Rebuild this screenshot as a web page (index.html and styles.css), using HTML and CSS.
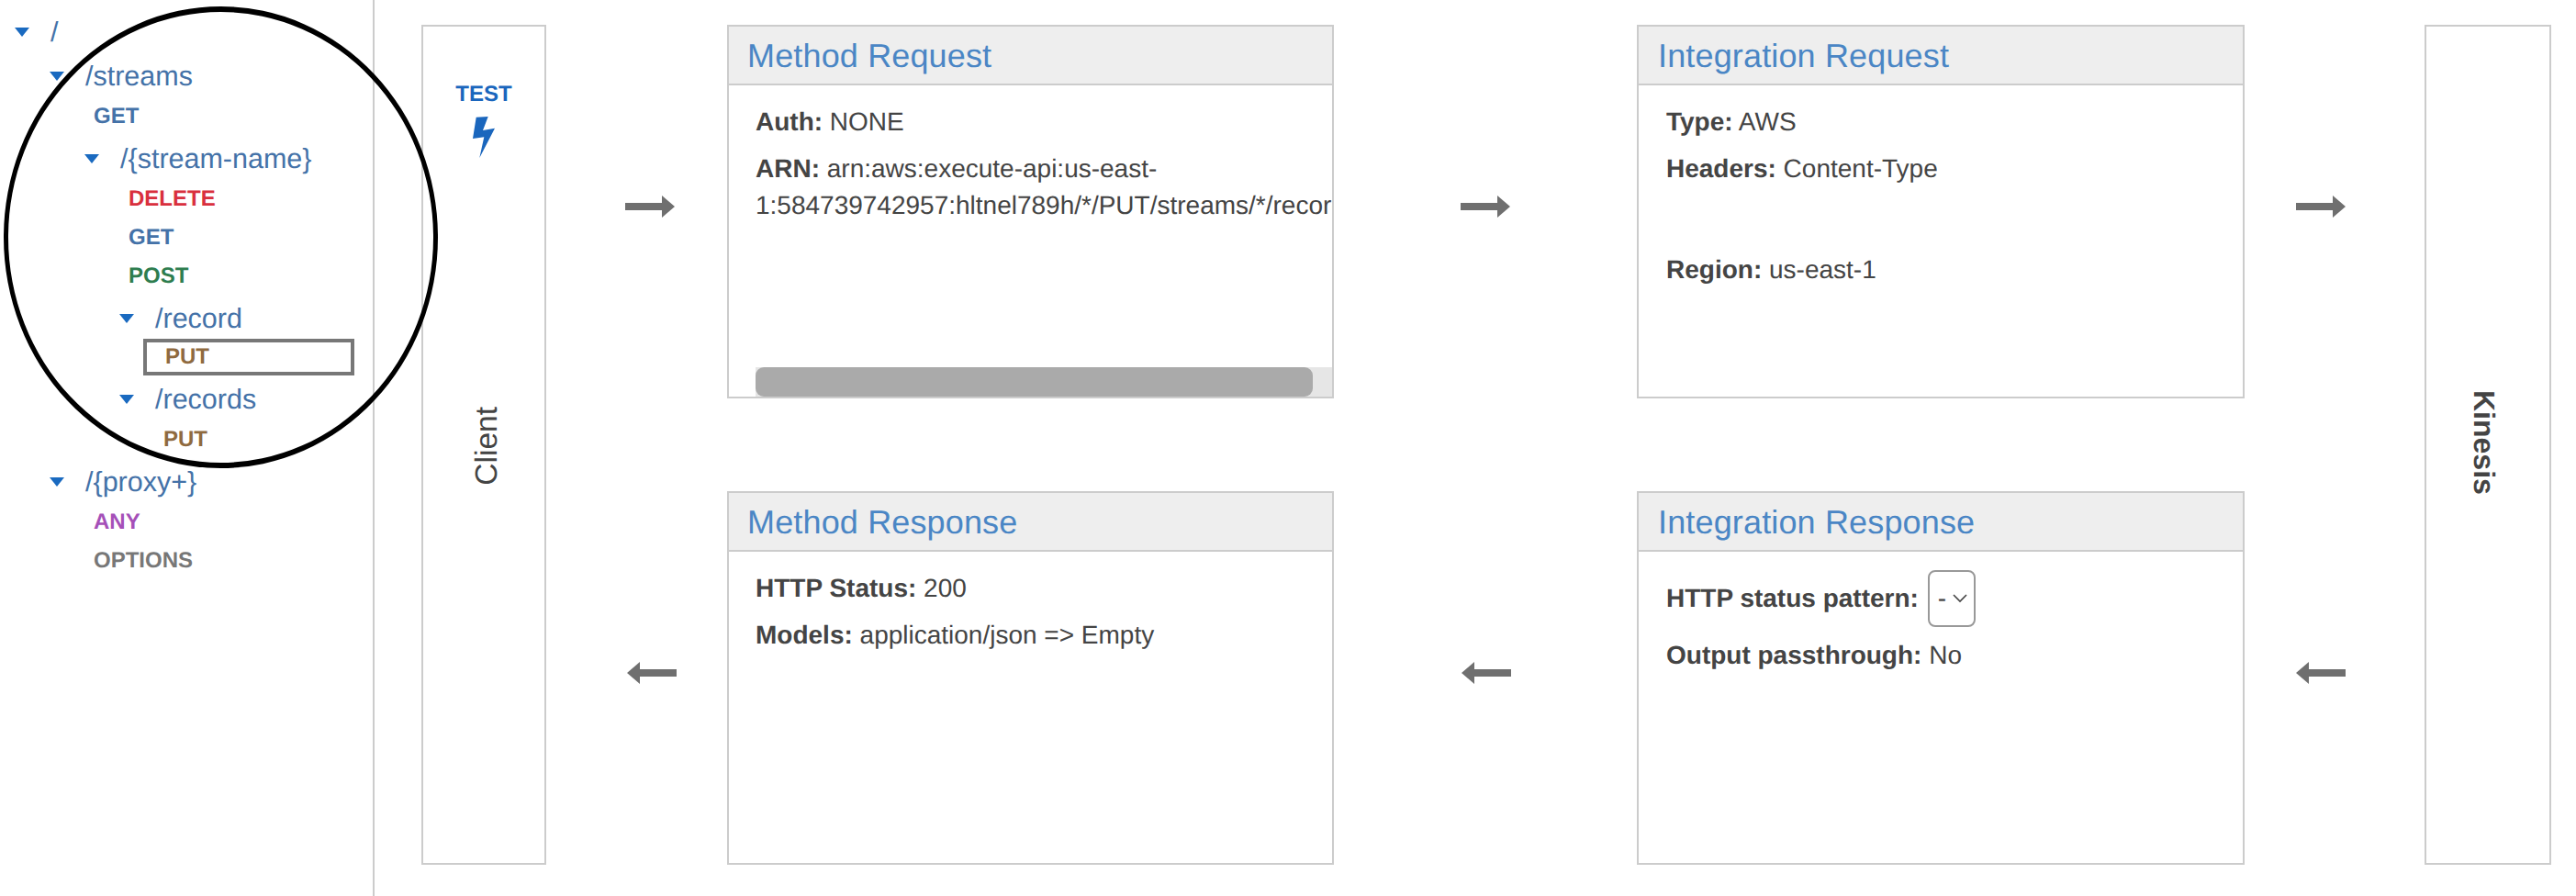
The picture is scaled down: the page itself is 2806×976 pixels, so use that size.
FILE: index.html
```html
<!DOCTYPE html>
<html lang="en">
<head>
    <meta charset="UTF-8">
    <title>API Gateway resources</title>
    <link rel="stylesheet" href="styles.css">
</head>
<body>
    <div class="page">
        <aside class="sidebar">
            <ul class="tree">
                <li>
                    <div class="resource"><span class="caret"></span>/</div>
                    <ul>
                        <li>
                            <div class="resource"><span class="caret"></span>/streams</div>
                            <ul>
                                <li class="method get">GET</li>
                                <li>
                                    <div class="resource"><span class="caret"></span>/{stream-name}</div>
                                    <ul>
                                        <li class="method delete">DELETE</li>
                                        <li class="method get">GET</li>
                                        <li class="method post">POST</li>
                                        <li>
                                            <div class="resource"><span class="caret"></span>/record</div>
                                            <ul>
                                                <li class="method put selected">PUT</li>
                                            </ul>
                                        </li>
                                        <li>
                                            <div class="resource"><span class="caret"></span>/records</div>
                                            <ul>
                                                <li class="method put">PUT</li>
                                            </ul>
                                        </li>
                                    </ul>
                                </li>
                            </ul>
                        </li>
                        <li>
                            <div class="resource"><span class="caret"></span>/{proxy+}</div>
                            <ul>
                                <li class="method any">ANY</li>
                                <li class="method options">OPTIONS</li>
                            </ul>
                        </li>
                    </ul>
                </li>
            </ul>
        </aside>

        <main class="flow">
            <section class="side-box client">
                <a class="test-link">
                    TEST
                    <svg class="bolt" viewBox="0 0 24 45" width="24" height="45"><path d="M3.7 .7 L16.7 0 L11 15 L24 12.7 L7.3 45 L12.3 22.3 L0 24 Z"/></svg>
                </a>
                <span class="client-label">Client</span>
            </section>

            <svg class="arrow arrow-a" viewBox="0 0 54 24" width="54" height="24"><path d="M0 8 H40 V0 L54 12 L40 24 V16 H0 Z"/></svg>

            <section class="card">
                <h3>Method Request</h3>
                <div class="card-body">
                    <div class="card-text">
                        <p><b>Auth:</b> NONE</p>
                        <p><b>ARN:</b> arn:aws:execute-api:us-east-<br>1:584739742957:hltnel789h/*/PUT/streams/*/record</p>
                    </div>
                    <div class="scroll-track"><div class="scroll-thumb"></div></div>
                </div>
            </section>

            <svg class="arrow" viewBox="0 0 54 24" width="54" height="24"><path d="M0 8 H40 V0 L54 12 L40 24 V16 H0 Z"/></svg>

            <section class="card card-right">
                <h3>Integration Request</h3>
                <div class="card-body">
                    <div class="card-text">
                        <p><b>Type:</b> AWS</p>
                        <p class="gap-after"><b>Headers:</b> Content-Type</p>
                        <p><b>Region:</b> us-east-1</p>
                    </div>
                </div>
            </section>

            <svg class="arrow arrow-c" viewBox="0 0 54 24" width="54" height="24"><path d="M0 8 H40 V0 L54 12 L40 24 V16 H0 Z"/></svg>

            <section class="side-box kinesis">
                <span class="kinesis-label">Kinesis</span>
            </section>

            <svg class="arrow arrow-d" viewBox="0 0 54 24" width="54" height="24"><path d="M54 8 H14 V0 L0 12 L14 24 V16 H54 Z"/></svg>

            <section class="card">
                <h3>Method Response</h3>
                <div class="card-body">
                    <div class="card-text">
                        <p><b>HTTP Status:</b> 200</p>
                        <p><b>Models:</b> application/json =&gt; Empty</p>
                    </div>
                </div>
            </section>

            <svg class="arrow arrow-e" viewBox="0 0 54 24" width="54" height="24"><path d="M54 8 H14 V0 L0 12 L14 24 V16 H54 Z"/></svg>

            <section class="card card-right">
                <h3>Integration Response</h3>
                <div class="card-body">
                    <div class="card-text">
                        <div class="status-row">
                            <b>HTTP status pattern:</b>
                            <div class="select-box">-
                                <svg viewBox="0 0 16 10" width="16" height="10"><path d="M1 1 L8 8 L15 1" fill="none" stroke="#444" stroke-width="1.6"/></svg>
                            </div>
                        </div>
                        <p><b>Output passthrough:</b> No</p>
                    </div>
                </div>
            </section>

            <svg class="arrow arrow-c" viewBox="0 0 54 24" width="54" height="24"><path d="M54 8 H14 V0 L0 12 L14 24 V16 H54 Z"/></svg>
        </main>
    </div>
    <div class="circle"></div>
</body>
</html>
```

FILE: styles.css
```css
html, body {
    margin: 0;
    height: 100%;
    background: #fff;
}

body {
    font-family: 'Liberation Sans', Arial, sans-serif;
    font-size: 28px;
    color: #444;
    overflow: hidden;
    text-rendering: geometricPrecision;
}

.page {
    display: flex;
    height: 976px;
}

/* hand drawn marker round the tree, sits over everything */
.circle {
    position: absolute;
    left: 4px;
    top: 7px;
    width: 473px;
    height: 503px;
    box-sizing: border-box;
    border-style: solid;
    border-color: #000;
    border-width: 6px 5px;
    border-radius: 50%;
}

/* left resource tree */
.sidebar {
    width: 406px;
    flex-shrink: 0;
    border-right: 2px solid #ccc;
}

.tree, .tree ul {
    list-style: none;
    margin: 0;
    padding: 0;
}

.tree {
    padding: 9px 0 0 16px;
}

.tree ul {
    padding-left: 38px;
}

.resource {
    display: flex;
    align-items: center;
    height: 44px;
    margin-top: 4px;
    font-size: 30.5px;
    color: #4472a8;
}

.caret {
    width: 0;
    height: 0;
    margin-right: 23px;
    border-left: 8.5px solid transparent;
    border-right: 8.5px solid transparent;
    border-top: 10px solid #1a6ac0;
}

.method {
    height: 42px;
    line-height: 44px;
    margin-left: 10px;
    font-size: 24px;
    font-weight: bold;
}

.get { color: #4472a8; }
.delete { color: #d9303e; }
.post { color: #2e7d4f; }
.put { color: #8f6a3f; }
.any { color: #a550b8; }
.options { color: #777; }

.selected {
    width: 230px;
    height: 40px;
    line-height: 32px;
    box-sizing: border-box;
    margin: 0 0 0 -12px;
    padding-left: 20px;
    border: 4px solid #777;
}

/* flow diagram */
.flow {
    flex: 1;
    display: grid;
    grid-template-columns: 136px 197px 661px 330px 662px 196px 138px;
    grid-template-rows: 407px 407px;
    row-gap: 101px;
    padding: 27px 0 0 51px;
}

.side-box {
    grid-row: 1 / 3;
    display: grid;
    grid-template-rows: 1fr auto 1fr;
    justify-items: center;
    border: 2px solid #ccc;
}

.client { grid-column: 1; }
.kinesis { grid-column: 7; }

.test-link {
    display: flex;
    flex-direction: column;
    align-items: center;
    padding-top: 60px;
    font-size: 24px;
    font-weight: bold;
    color: #1a66bd;
}

.bolt {
    margin-top: 10px;
    fill: #1a66bd;
}

.client-label {
    grid-row: 2;
    margin: 3px 0 0 7px;
    font-size: 33.5px;
    writing-mode: vertical-rl;
    transform: rotate(180deg);
}

.kinesis-label {
    grid-row: 2;
    margin: 0 10px 6px 0;
    font-size: 32px;
    font-weight: bold;
    writing-mode: vertical-rl;
}

.arrow {
    align-self: start;
    justify-self: center;
    margin-top: 186px;
    fill: #6f6f6f;
}

.arrow-a { margin-left: 29px; }
.arrow-c { margin-right: 30px; }
.arrow-d { margin-left: 33px; }
.arrow-e { margin-left: 2px; }

.card {
    display: flex;
    flex-direction: column;
    border: 2px solid #ccc;
    min-width: 0;
}

.card h3 {
    margin: 0;
    height: 64px;
    line-height: 64px;
    padding-left: 20px;
    box-sizing: border-box;
    font-size: 36px;
    font-weight: normal;
    letter-spacing: .15px;
    color: #4a86c5;
    background: #eee;
    border-bottom: 2px solid #ccc;
}

.card-right h3 {
    padding-left: 21px;
}

.card-body {
    flex: 1;
    display: flex;
    flex-direction: column;
    overflow: hidden;
    min-height: 0;
}

.card-text {
    flex: 1;
    padding: 20px 0 0 29px;
    white-space: nowrap;
}

.card-right .card-text {
    padding-left: 30px;
}

.card-text p {
    margin: 0 0 11px;
    line-height: 40px;
}

.card-text .gap-after {
    margin-bottom: 70px;
}

.scroll-track {
    height: 32px;
    margin-left: 29px;
    background: #e6e6e6;
}

.scroll-thumb {
    width: 607px;
    height: 100%;
    border-radius: 9px;
    background: #aaa;
}

.status-row {
    display: flex;
    align-items: center;
    margin-bottom: 11px;
}

.select-box {
    display: flex;
    align-items: center;
    justify-content: space-between;
    box-sizing: border-box;
    width: 52px;
    height: 62px;
    margin-left: 10px;
    padding: 0 7px 0 9px;
    border: 2px solid #999;
    border-radius: 8px;
}
```
